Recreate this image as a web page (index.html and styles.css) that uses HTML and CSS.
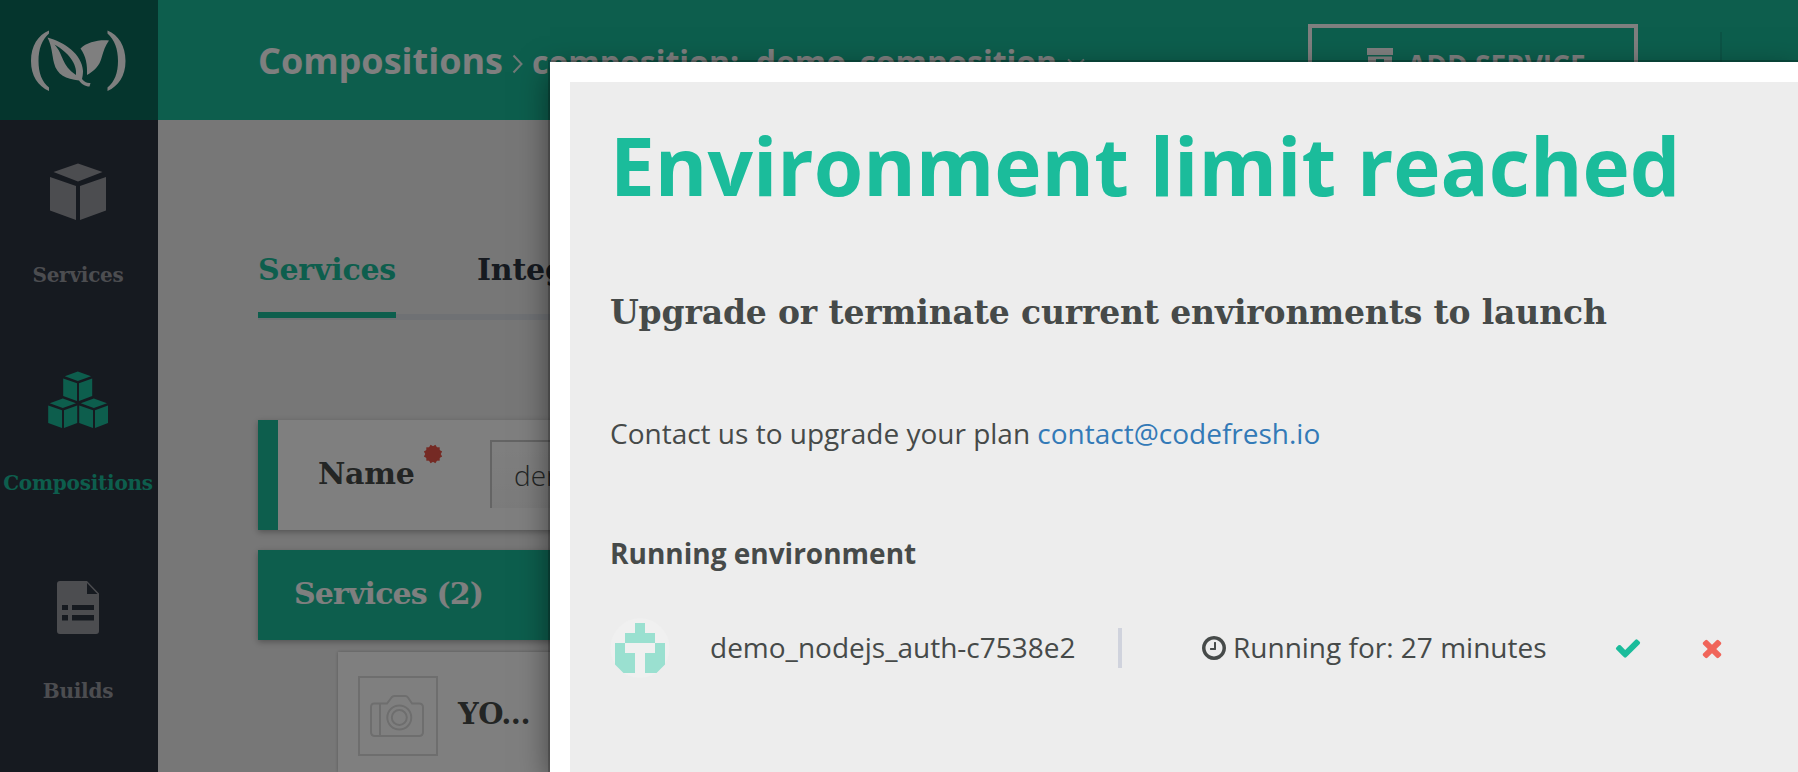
FILE: index.html
```html
<!DOCTYPE html>
<html lang="en">
<head>
<meta charset="utf-8">
<title>Compositions</title>
<link rel="stylesheet" href="styles.css">
</head>
<body>
<div class="app">
  <nav class="sidebar">
    <div class="logo">
      <svg width="158" height="120" viewBox="0 0 158 120" fill="#fff">
        <path d="M49 30.500C38 35 31 46 31 61S38 86 49 91V87.500C42 82 38.500 73 38.500 61S42 39.500 49 33.500Z"/>
        <path d="M107.500 30.500C118.500 35 125.500 46 125.500 61S118.500 86 107.500 91V87.500C114.500 82 118 73 118 61S114.500 39.500 107.500 33.500Z"/>
        <path fill-rule="evenodd" d="M47.500 37.500C64 42 82 54 83 71C83 74 82.500 77 82 79C84.500 82 87 83.500 90.500 83L89.500 86.500C85 86.500 81.500 84 79 80.500C66 79 57 75 54 63C52 55 52 46 47.500 37.500ZM54.500 44.500C64 55 61 65 76 75C77.500 64 68 52 54.500 44.500Z"/>
        <path d="M109 40.500C99 39.500 87 42 80.500 48.500C86 56 87.500 65 87 75C94 71 99.500 66 101.500 58C103.500 51 105.500 45 109 40.500Z"/>
      </svg>
    </div>
    <a class="nav-item">
      <svg width="60" height="58" viewBox="0 0 60 58" fill="currentColor"><path d="M30 1.500 54.500 10 30 19.500 5.500 10ZM2 15 28 24V58L2 48.500ZM58 15 32 24V58L58 48.500Z"/></svg>
      <span>Services</span>
    </a>
    <a class="nav-item active">
      <svg width="60" height="58" viewBox="0 0 60 58" fill="currentColor">
        <g id="box"><path d="M29.800 1.500 43 6.200 29.800 11 16.800 6.200ZM15.200 8.500 29 13.200V31L15.200 26ZM44.200 8.500 31 13.200V31L44.200 26Z"/></g>
        <use href="#box" x="-15" y="27"/>
        <use href="#box" x="16" y="27"/>
      </svg>
      <span>Compositions</span>
    </a>
    <a class="nav-item">
      <svg width="60" height="58" viewBox="0 0 60 58" fill="currentColor"><path fill-rule="evenodd" d="M12 3H39L51 15.500V53Q51 56 48 56H12Q9 56 9 53V6Q9 3 12 3ZM39 5V16H49.500ZM14 27V32H20V27ZM24 27V32H46V27ZM14 37V42.500H20V37ZM24 37V42.500H46V37Z"/></svg>
      <span>Builds</span>
    </a>
  </nav>
  <div class="main">
    <header class="header">
      <span class="crumb">Compositions</span>
      <svg class="sep" width="12" height="20" viewBox="0 0 12 20"><path d="M1.500 1.500 9.500 10 1.500 18.500"/></svg>
      <span class="current">composition:&nbsp; demo_composition</span>
      <svg class="caret" width="18" height="12" viewBox="0 0 18 12"><path d="M1 1.500 9 9 17 1.500"/></svg>
      <a class="add-btn">
        <svg width="26" height="26" viewBox="0 0 26 26" fill="#fff"><path fill-rule="evenodd" d="M0 0H26V7H0ZM1 8.500H25V26H1ZM9 11V14H17V11Z"/></svg>
        <span>ADD SERVICE</span>
      </a>
      <i class="divider"></i>
    </header>
    <section class="content">
      <div class="tabs">
        <a class="tab selected">Services</a>
        <a class="tab">Integration</a>
      </div>
      <div class="name-card">
        <label>Name</label>
        <svg class="required" width="20" height="20" viewBox="-10 -10 20 20" fill="#ea5548">
          <rect id="sq" x="-6.700" y="-6.700" width="13.400" height="13.400"/>
          <use href="#sq" transform="rotate(30)"/><use href="#sq" transform="rotate(60)"/>
        </svg>
        <div class="field">demo_composition</div>
      </div>
      <div class="services-bar">Services (2)</div>
      <div class="service">
        <div class="photo">
          <svg width="76" height="76" viewBox="2 2 76 76" fill="none" stroke="#dcdcdc" stroke-width="2">
            <path d="M16 27.500H29L34 21Q35 20 37 20H47Q49 20 50 21.500L54 27.500H61Q65 27.500 65 31.500V56Q65 60 61 60H17Q13 60 13 56V31.500Q13 27.500 16 27.500ZM22 27.500V60"/>
            <circle cx="41.300" cy="41.500" r="12"/><circle cx="41.300" cy="41.500" r="7.500"/>
          </svg>
        </div>
        <span>YO...</span>
      </div>
    </section>
  </div>
</div>
<div class="backdrop"></div>
<div class="modal">
  <div class="modal-body">
    <h1>Environment limit reached</h1>
    <h2>Upgrade or terminate current environments to launch</h2>
    <p class="contact">Contact us to upgrade your plan <a>contact@codefresh.io</a></p>
    <h3>Running environment</h3>
    <div class="env">
      <svg class="avatar" width="60" height="60" viewBox="0 0 60 60">
        <circle cx="30" cy="30" r="29.700" fill="#f0f0f0"/>
        <path fill="#9ae0d0" d="M25 5H35V15H45V25H55V46.500L46.500 55H35V35H45V25H15V35H25V55H13.500L5 46.500V25H15V15H25Z"/>
      </svg>
      <span class="env-name">demo_nodejs_auth-c7538e2</span>
      <i class="bar"></i>
      <svg class="clock" width="28" height="28" viewBox="0 0 1792 1792"><path d="M1024 544v448q0 14-9 23t-23 9h-320q-14 0-23-9t-9-23v-64q0-14 9-23t23-9h224v-352q0-14 9-23t23-9h64q14 0 23 9t9 23zm416 352q0-148-73-273t-198-198-273-73-273 73-198 198-73 273 73 273 198 198 273 73 273-73 198-198 73-273zm224 0q0 209-103 385.500t-279.500 279.500-385.500 103-385.500-103-279.500-279.500-103-385.500 103-385.500 279.500-279.500 385.500-103 385.500 103 279.500 279.500 103 385.500z"/></svg>
      <span class="env-time">Running for: 27 minutes</span>
      <svg class="ok" width="28" height="28" viewBox="0 0 1792 1792"><path d="M1671 566q0 40-28 68l-724 724-136 136q-28 28-68 28t-68-28l-136-136-362-362q-28-28-28-68t28-68l136-136q28-28 68-28t68 28l294 295 656-657q28-28 68-28t68 28l136 136q28 28 28 68z"/></svg>
      <svg class="kill" width="28" height="28" viewBox="0 0 1792 1792"><path d="M1490 1322q0 40-28 68l-136 136q-28 28-68 28t-68-28l-294-294-294 294q-28 28-68 28t-68-28l-136-136q-28-28-28-68t28-68l294-294-294-294q-28-28-28-68t28-68l136-136q28-28 68-28t68 28l294 294 294-294q28-28 68-28t68 28l136 136q28 28 28 68t-28 68l-294 294 294 294q28 28 28 68z"/></svg>
    </div>
  </div>
</div>
</body>
</html>
```
FILE: styles.css
```css
* { box-sizing: border-box; }
body {
  margin: 0;
  height: 772px;
  position: relative;
  overflow: hidden;
  font-family: "Open Sans", sans-serif;
  color: #464a49;
}
svg { display: block; flex: none; }
h1, h2, h3, p { margin: 0; }

.app { display: flex; height: 772px; background: #eee; }
.sidebar, .tab, .name-card label, .services-bar, .service, h2 {
  font-family: "DejaVu Serif", serif;
  font-weight: 700;
}
.sidebar { width: 158px; flex: none; background: #2d3441; }
.logo { height: 120px; background: #0a6b5b; margin-bottom: 42px; }
.nav-item {
  display: flex;
  flex-direction: column;
  align-items: center;
  height: 208px;
  padding-right: 2px;
  color: #999ba1;
  font-size: 20px;
  letter-spacing: -0.25px;
}
.nav-item:last-child { height: 190px; }
.nav-item span { margin-top: 40px; line-height: 30px; white-space: nowrap; }
.nav-item.active { color: #1bbc9b; }

.main { flex: 1; min-width: 0; }
.header {
  display: flex;
  height: 120px;
  padding-left: 100px;
  background: #1bbc9b;
  color: #fff;
  font-weight: 700;
  white-space: nowrap;
}
.crumb { width: 254px; padding-top: 37px; font-size: 36px; line-height: 48px; }
.header path { fill: none; stroke: #e4f3ef; stroke-width: 2; }
.header .add-btn path { fill: #fff; stroke: none; }
.sep { margin-top: 54px; }
.current { width: 527px; margin-left: 8px; padding-top: 38px; font-size: 32px; line-height: 48px; }
.caret { margin: 58px 0 0 8px; }
.add-btn {
  display: flex;
  width: 330px;
  height: 72px;
  margin: 24px 0 0 223px;
  padding: 20px 0 0 55px;
  border: 4px solid #fff;
  font-size: 28px;
  line-height: 40px;
}
.add-btn span { margin-left: 14px; margin-top: -3px; }
.divider { width: 2px; height: 56px; margin: 32px 0 0 82px; background: #19a98c; }

.content { padding: 120px 0 0 100px; }
.tabs {
  display: flex;
  gap: 81px;
  height: 80px;
  border-bottom: 6px solid #dfe2e8;
}
.tab { height: 78px; padding-top: 8px; font-size: 30px; line-height: 44px; color: #2d3441; letter-spacing: -0.2px; }
.tab.selected { width: 138px; color: #1bbc9b; border-bottom: 6px solid #1bbc9b; }
.name-card {
  display: flex;
  height: 110px;
  margin-top: 100px;
  padding-left: 40px;
  border-left: 20px solid #1bbc9b;
  background: #fff;
  box-shadow: 0 2px 6px rgba(0,0,0,.3);
}
.name-card label { width: 105px; padding-top: 32px; font-size: 30px; line-height: 44px; letter-spacing: -0.3px; }
.required { margin-top: 24px; }
.field {
  width: 400px;
  height: 68px;
  margin: 20px 0 0 47px;
  padding: 10px 22px;
  border: 2px solid #c8c8c8;
  border-bottom: 0;
  background: linear-gradient(#fff, #f7f7f7);
  font-size: 28px;
  line-height: 46px;
  font-weight: 300;
}
.services-bar {
  height: 90px;
  margin-top: 20px;
  padding: 22px 36px;
  background: #1bbc9b;
  color: #fff;
  font-size: 30px;
  line-height: 44px;
  letter-spacing: -0.85px;
  box-shadow: 0 2px 6px rgba(0,0,0,.3);
}
.service {
  display: flex;
  height: 120px;
  margin: 12px 0 0 80px;
  padding: 24px 20px 0;
  background: #fff;
  box-shadow: 0 0 3px rgba(0,0,0,.25);
  font-size: 29px;
}
.photo { width: 80px; height: 80px; border: 2px solid #dcdcdc; }
.service span { margin: 16px 0 0 20px; line-height: 44px; letter-spacing: -0.5px; }

.backdrop { position: absolute; inset: 0; background: rgba(0,0,0,.5); }
.modal {
  position: absolute;
  left: 550px;
  top: 62px;
  right: 0;
  bottom: 0;
  padding: 20px 0 0 20px;
  background: #fff;
  box-shadow: 0 0 0 2px rgba(0,0,0,.2), 0 10px 30px rgba(0,0,0,.5);
}
.modal-body { height: 690px; padding: 28px 40px 0; background: #ededed; white-space: nowrap; }
h1 { font-size: 80px; line-height: 110px; color: #1bbc9b; }
h2 { margin-top: 71px; font-size: 33px; line-height: 44px; letter-spacing: -0.16px; }
.contact { margin-top: 78px; font-size: 28px; line-height: 40px; }
.contact a { color: #337ab7; }
h3 { margin-top: 80px; font-size: 28px; line-height: 40px; }
.env { display: flex; align-items: center; height: 60px; margin-top: 45px; font-size: 28px; line-height: 40px; }
.env span { margin-bottom: 3px; }
.env-name { width: 408px; margin-left: 40px; }
.bar { width: 4px; height: 40px; background: #d0d3dd; }
.clock { margin-left: 78px; fill: #464a49; }
.env-time { width: 377px; margin-left: 5px; }
.ok { margin-left: 4px; fill: #1bbc9b; }
.kill { margin-left: 56px; fill: #f0655a; }
```
